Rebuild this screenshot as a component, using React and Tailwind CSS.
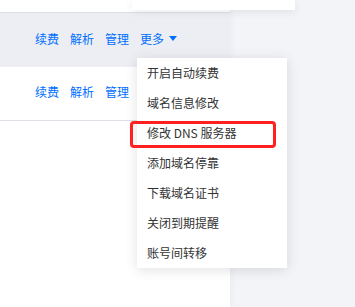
export default function App() {
  const font = { fontFamily: '"Noto Sans CJK SC", "Liberation Sans", sans-serif' }
  const items = ['开启自动续费', '域名信息修改', '修改 DNS 服务器', '添加域名停靠', '下载域名证书', '关闭到期提醒', '账号间转移']

  return (
    <div className="relative w-[355px] h-[307px] overflow-hidden bg-[#f3f4f8] flex text-[12px]" style={font}>
      <div className="w-[230px] h-full bg-white flex flex-col shadow-[2px_0_6px_rgba(0,0,0,0.03)]">
        <div className="h-[13px] border-b border-[#dcdfe6]" />
        <div className="h-[54px] bg-[#eceef3] flex items-center pb-[3px]">
          <span className="w-[4px] overflow-hidden whitespace-nowrap text-[#333] -ml-[8px]">替</span>
          <div className="flex items-center gap-[11px] text-[#006eff] ml-[39px]">
            <span>续费</span><span>解析</span><span>管理</span>
            <span className="flex items-center">更多<span className="ml-[5px] w-0 h-0 border-l-[4px] border-r-[4px] border-t-[5px] border-l-transparent border-r-transparent border-t-[#006eff]" /></span>
          </div>
        </div>
        <div className="h-[54px] flex items-center border-b border-[#dcdfe6] pb-[4px]">
          <span className="w-[4px] overflow-hidden whitespace-nowrap text-[#333] -ml-[8px]">后</span>
          <div className="flex items-center gap-[11px] text-[#006eff] ml-[39px]">
            <span>续费</span><span>解析</span><span>管理</span>
          </div>
        </div>
        <div className="flex-1" />
      </div>

      <div className="absolute left-[132px] top-0 w-[163px] h-[10px] bg-white shadow-[0_2px_8px_rgba(0,0,0,0.08)]" />

      <div className="absolute left-[137px] top-[58px] w-[150px] bg-white shadow-[0_2px_12px_rgba(0,0,0,0.12)]">
        {items.map(t => (
          <div key={t} className="h-[30px] flex items-center pl-[10px] text-[#333]">{t}</div>
        ))}
      </div>

      <div className="absolute left-[130px] top-[121px] w-[146px] h-[27px] border-[3px] border-[#ff2020] rounded-[4px]" />
    </div>
  )
}
